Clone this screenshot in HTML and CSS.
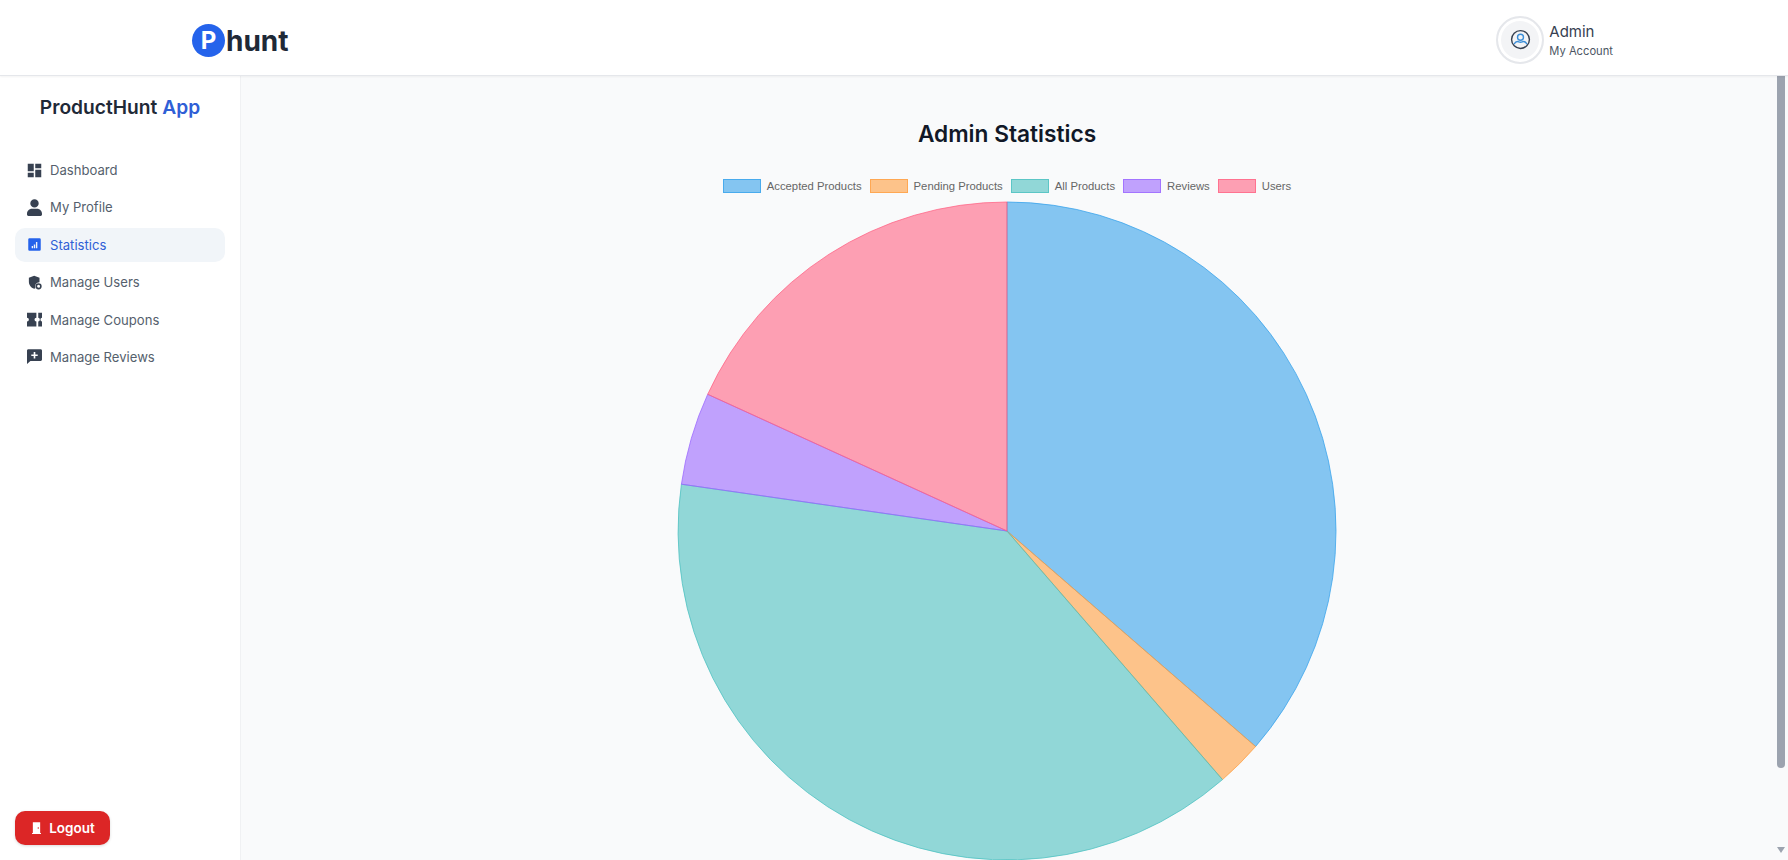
FILE: index.html
```html
<!DOCTYPE html>
<html lang="en">
<head>
  <meta charset="UTF-8" />
  <meta name="viewport" content="width=device-width, initial-scale=1" />
  <title>ProductHunt App - Admin Statistics</title>
  <link rel="stylesheet" href="styles.css">
</head>
<body>
  <header class="topbar">
    <div class="logo">
      <span class="logo-mark">P</span>
      <span class="logo-text">hunt</span>
    </div>
    <div class="account">
      <div class="avatar">
        <svg viewBox="0 0 24 24" width="21" height="21" fill="none">
          <circle cx="12" cy="12" r="10.2" stroke="#374151" stroke-width="1.6"/>
          <circle cx="12" cy="9.4" r="3.4" stroke="#3b8ed8" stroke-width="1.6"/>
          <path d="M4.6 17.2c1.6-2.6 4-3.2 5.4-2.6 1.3.6 2.700.6 4 0 1.400-.6 3.800 0 5.400 2.600" stroke="#3b8ed8" stroke-width="1.6"/>
        </svg>
      </div>
      <div class="account-text">
        <div class="account-name">Admin</div>
        <div class="account-sub">My Account</div>
      </div>
    </div>
  </header>

  <div class="layout">
    <aside class="sidebar">
      <h2 class="side-title">ProductHunt <span>App</span></h2>
      <nav class="side-nav">
        <a class="nav-item" href="#">
          <svg class="nav-icon" viewBox="2 2 20 20"><path d="M3 13h8V3H3v10zm0 8h8v-6H3v6zm10 0h8V11h-8v10zm0-18v6h8V3h-8z"/></svg>
          Dashboard
        </a>
        <a class="nav-item" href="#">
          <svg class="nav-icon nav-icon-tall" viewBox="0 0 15 17"><path d="M7.500 8.600a4.200 4.200 0 1 0 0-8.400 4.200 4.200 0 0 0 0 8.400zM5 9.700C2.200 9.700 0 11.900 0 14.700v.9c0 .8.600 1.400 1.400 1.400h12.200c.8 0 1.400-.6 1.400-1.400v-.9c0-2.800-2.200-5-5-5z"/></svg>
          My Profile
        </a>
        <a class="nav-item active" href="#">
          <svg class="nav-icon" viewBox="0 0 24 24"><path fill-rule="evenodd" d="M4 2h16a2 2 0 0 1 2 2v16a2 2 0 0 1-2 2H4a2 2 0 0 1-2-2V4a2 2 0 0 1 2-2zm3.500 12.500V18h2.200v-3.500H7.500zm3.400-2.500v6h2.200v-6h-2.200zm3.400-4v10h2.200V8h-2.200z"/></svg>
          Statistics
        </a>
        <a class="nav-item" href="#">
          <svg class="nav-icon" viewBox="0 0 24 24"><path d="M11.500 1 3 4.500v6.200c0 5 3.300 9.700 8.500 11.300.7-.2 1.300-.5 1.900-.8A7 7 0 0 1 20 11.500V4.500L11.500 1z"/><path fill-rule="evenodd" d="M18.500 13a5 5 0 1 0 0 10 5 5 0 0 0 0-10zm0 2.600a2.400 2.400 0 1 1 0 4.800 2.400 2.400 0 0 1 0-4.800z"/></svg>
          Manage Users
        </a>
        <a class="nav-item" href="#">
          <svg class="nav-icon" viewBox="0 0 24 24"><path d="M0 1h15v8a3 3 0 0 0 0 6v8H0v-8a3 3 0 0 0 0-6V1zm18 0h6v8a2.500 3 0 0 0 0 6v8h-6v-8a2.500 3 0 0 0 0-6V1z"/></svg>
          Manage Coupons
        </a>
        <a class="nav-item" href="#">
          <svg class="nav-icon" viewBox="1 1 22 22"><path fill-rule="evenodd" d="M3 1.500h18c1.100 0 2 .9 2 2v13c0 1.100-.9 2-2 2H6l-5 4.500V3.500c0-1.100.9-2 2-2zm7.800 4v3.500H7.300v2.400h3.500v3.500h2.400v-3.500h3.500V9h-3.500V5.500h-2.400z"/></svg>
          Manage Reviews
        </a>
      </nav>
      <button class="logout-btn">
        <svg viewBox="0 0 16 16" width="13" height="14"><path fill-rule="evenodd" d="M3.500 1h9v13h1v1.500h-11V14h1V1zm6 6v2h1.300V7H9.500z"/></svg>
        Logout
      </button>
    </aside>

    <main class="content">
      <h1 class="page-title">Admin Statistics</h1>
      <ul class="legend">
        <li><span class="swatch swatch-blue"></span>Accepted Products</li>
        <li><span class="swatch swatch-orange"></span>Pending Products</li>
        <li><span class="swatch swatch-teal"></span>All Products</li>
        <li><span class="swatch swatch-purple"></span>Reviews</li>
        <li><span class="swatch swatch-pink"></span>Users</li>
      </ul>
      <svg class="pie" viewBox="0 0 660 660" width="660" height="660">
        <path class="slice-blue" d="M330 330V1A329 329 0 0 1 578.6 545.500Z"/>
        <path class="slice-orange" d="M330 330L578.6 545.500A329 329 0 0 1 545.500 578.600Z"/>
        <path class="slice-teal" d="M330 330L545.500 578.600A329 329 0 0 1 4.400 283.200Z"/>
        <path class="slice-purple" d="M330 330L4.400 283.200A329 329 0 0 1 30.700 193.300Z"/>
        <path class="slice-pink" d="M330 330L30.700 193.300A329 329 0 0 1 330 1Z"/>
      </svg>
      <div class="scroll-thumb"></div>
      <div class="scroll-arrow"></div>
    </main>
  </div>
</body>
</html>
```

FILE: styles.css
```css
* { box-sizing: border-box; }
html, body {
  height: 100%;
}
body {
  margin: 0;
  background: #fff;
  color: #1f2937;
  font-family: Inter, 'Noto Sans', sans-serif;
  display: flex;
  flex-direction: column;
  overflow: hidden;
}

/* top bar */
.topbar {
  flex: none;
  height: 76px;
  display: flex;
  align-items: center;
  justify-content: space-between;
  padding: 4px 175px 0 192px;
  background: #fff;
  border-bottom: 1px solid #e5e7eb;
  box-shadow: 0 1px 2px rgba(0,0,0,0.05);
  position: relative;
  z-index: 2;
}
.logo {
  display: flex;
  align-items: center;
  margin-top: 2px;
}
.logo-mark {
  width: 33px;
  height: 33px;
  border-radius: 50%;
  background: #2563eb;
  color: #fff;
  font-size: 24px;
  font-weight: 700;
  display: flex;
  align-items: center;
  justify-content: center;
}
.logo-text {
  font-size: 28px;
  line-height: 36px;
  font-weight: 700;
  color: #1f2937;
  margin-left: 1px;
}
.account {
  display: flex;
  align-items: center;
  gap: 5px;
}
.avatar {
  width: 48px;
  height: 48px;
  border-radius: 50%;
  background: #f3f4f6;
  border: 2px solid #e5e7eb;
  box-shadow: inset 0 0 0 3px #fff;
  display: flex;
  align-items: center;
  justify-content: center;
}
.account-name {
  font-size: 15px;
  line-height: 22px;
  color: #374151;
}
.account-sub {
  font-size: 11.2px;
  line-height: 16px;
  color: #4b5563;
}

/* sidebar */
.layout {
  flex: 1;
  display: flex;
  min-height: 0;
}
.sidebar {
  flex: none;
  width: 241px;
  padding: 17px 15px 15px;
  background: #fff;
  border-right: 1px solid #f0f1f3;
  display: flex;
  flex-direction: column;
}
.side-title {
  margin: 0 0 32px;
  font-size: 19.2px;
  line-height: 28px;
  font-weight: 600;
  text-align: center;
  color: #1f2937;
}
.side-title span {
  color: #2f5fd6;
}
.side-nav {
  display: flex;
  flex-direction: column;
  gap: 3.400px;
}
.nav-item {
  display: flex;
  align-items: center;
  gap: 8px;
  height: 34px;
  padding: 0 12px;
  border-radius: 10px;
  font-size: 13.1px;
  color: #555f6d;
  text-decoration: none;
}
.nav-icon {
  width: 15px;
  height: 15px;
  fill: #374151;
  flex: none;
}
.nav-icon-tall {
  height: 17px;
}
.nav-item.active {
  background: #f1f5f9;
  color: #2f5fd6;
}
.nav-item.active .nav-icon {
  fill: #2563eb;
}
.logout-btn {
  margin-top: auto;
  align-self: flex-start;
  width: 95px;
  height: 34px;
  display: flex;
  align-items: center;
  justify-content: center;
  gap: 6px;
  background: #dc2626;
  color: #fff;
  border: none;
  border-radius: 10px;
  font-family: inherit;
  font-size: 13.5px;
  font-weight: 600;
  box-shadow: 0 1px 3px rgba(0,0,0,0.15);
}
.logout-btn svg {
  fill: #fff;
}

/* main area */
.content {
  flex: 1;
  min-width: 0;
  position: relative;
  overflow: hidden;
  background: #f9fafb;
  padding: 42px 15px 0 0;
  display: flex;
  flex-direction: column;
  align-items: center;
}
.page-title {
  margin: 0 0 29px;
  font-size: 22.7px;
  line-height: 32px;
  font-weight: 600;
  color: #111827;
}
.legend {
  list-style: none;
  margin: 0 0 8px;
  padding: 0;
  display: flex;
  gap: 8px;
  font-family: 'Liberation Sans', Arial, sans-serif;
  font-size: 11.3px;
  line-height: 14px;
  color: #666;
}
.legend li {
  display: flex;
  align-items: center;
  gap: 6px;
}
.swatch {
  width: 38px;
  height: 14px;
  border: 1px solid;
}
.swatch-blue { background: rgba(54,162,235,0.6); border-color: rgba(54,162,235,0.75); }
.swatch-orange { background: rgba(255,159,64,0.6); border-color: rgba(255,159,64,0.75); }
.swatch-teal { background: rgba(75,192,192,0.6); border-color: rgba(75,192,192,0.75); }
.swatch-purple { background: rgba(153,102,255,0.6); border-color: rgba(153,102,255,0.75); }
.swatch-pink { background: rgba(255,99,132,0.6); border-color: rgba(255,99,132,0.75); }

.pie {
  flex: none;
}
.pie path {
  stroke-width: 1;
}
.slice-blue { fill: rgba(54,162,235,0.6); stroke: rgba(54,162,235,0.75); }
.slice-orange { fill: rgba(255,159,64,0.6); stroke: rgba(255,159,64,0.75); }
.slice-teal { fill: rgba(75,192,192,0.6); stroke: rgba(75,192,192,0.75); }
.slice-purple { fill: rgba(153,102,255,0.6); stroke: rgba(153,102,255,0.75); }
.slice-pink { fill: rgba(255,99,132,0.6); stroke: rgba(255,99,132,0.75); }

/* scrollbar drawn over the main area */
.scroll-thumb {
  position: absolute;
  top: 0;
  right: 3px;
  width: 8px;
  height: 692px;
  background: #9ca3af;
  border-radius: 0 0 4px 4px;
}
.scroll-arrow {
  position: absolute;
  bottom: 7px;
  right: 3px;
  border-left: 4px solid transparent;
  border-right: 4px solid transparent;
  border-top: 6px solid #9ca3af;
}
```
